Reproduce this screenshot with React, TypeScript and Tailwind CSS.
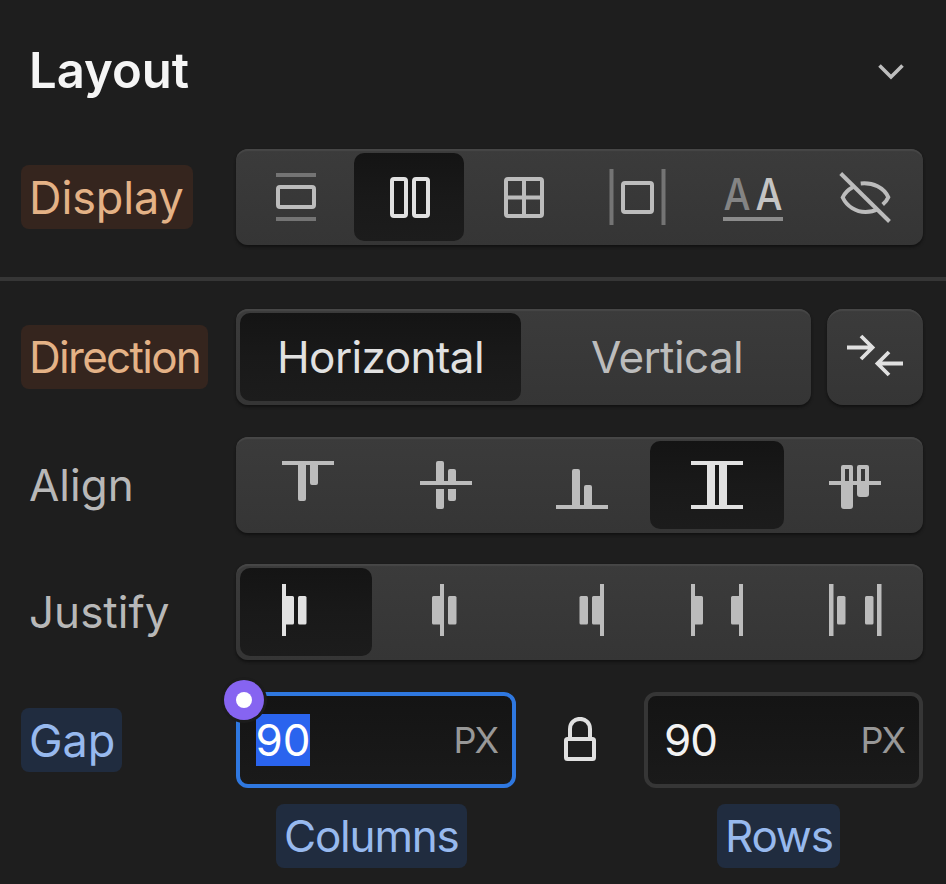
import type { ReactNode } from "react";

type IconProps = { ox?: number; oy?: number; children: ReactNode };

function Icon({ ox = 0, oy = 0, children }: IconProps) {
  return (
    <svg
      width="60"
      height="60"
      viewBox={`${-ox} ${-oy} 60 60`}
      className="block shrink-0 overflow-visible"
      fill="none"
    >
      {children}
    </svg>
  );
}

const raised =
  "bg-linear-to-b from-[#3b3b3b] to-[#353535] shadow-[inset_0_3px_1px_-1px_#474747,0_2px_3px_0_#111111]";
const pressed =
  "rounded-[10px] bg-linear-to-b from-[#141414] via-[#191919] to-[#1c1c1c] text-[#e1e1e1]";

function Segments({ children, className = "w-[687px]" }: { children: ReactNode; className?: string }) {
  return (
    <div className={`flex h-24 shrink-0 gap-1 rounded-xl p-1 ${raised} ${className}`}>{children}</div>
  );
}

function Cell({ width, active = false, children }: { width: string; active?: boolean; children: ReactNode }) {
  return (
    <button
      className={`flex h-[88px] shrink-0 items-center justify-center ${width} ${active ? pressed : "text-[#bcbcbc]"}`}
    >
      {children}
    </button>
  );
}

function Chip({ tone, size, children }: { tone: string; size: string; children: ReactNode }) {
  return (
    <span
      className={`flex h-16 items-center rounded-lg pl-2 leading-none whitespace-nowrap ${tone} ${size}`}
    >
      {children}
    </span>
  );
}

const orange = "bg-[#35251e] text-[#e4b286]";
const blue = "bg-[#202c3f] text-[#97b9ee]";
const plain = "text-[#b8b8b8]";

function Row({ label, className = "", children }: { label: ReactNode; className?: string; children: ReactNode }) {
  return (
    <div className={`flex h-24 items-center ${className}`}>
      <div className="flex w-[236px] shrink-0 pl-[21px]">{label}</div>
      {children}
    </div>
  );
}

export default function App() {
  return (
    <main className="flex h-[884px] w-[946px] flex-col overflow-hidden bg-[#1e1e1e] font-['Inter',sans-serif]">
      <header className="mb-[9px] flex h-[140px] shrink-0 items-center justify-between pr-[40px] pl-[29px]">
        <h2 className="text-[49px] leading-none font-semibold text-[#f5f5f5]">Layout</h2>
        <svg width="30" height="22" viewBox="0 -1 30 22" fill="none" stroke="#bdbdbd" strokeWidth="3.6">
          <path d="M3.5 5.5 15 17 26.5 5.5" />
        </svg>
      </header>

      <Row label={<Chip tone={orange} size="w-[172px] text-[45px] tracking-[-0.1px]">Display</Chip>}>
        <Segments>
          <Cell width="w-[110px]">
            <Icon>
              <path d="M11 8H51M11 52H51" stroke="#747474" strokeWidth="4" />
              <rect x="13" y="20" width="36" height="20" rx="2" stroke="currentColor" strokeWidth="4" />
            </Icon>
          </Cell>
          <Cell width="w-[110px]" active>
            <Icon>
              <g stroke="currentColor" strokeWidth="4">
                <rect x="13" y="12" width="14" height="37" rx="2" />
                <rect x="35" y="12" width="14" height="37" rx="2" />
              </g>
            </Icon>
          </Cell>
          <Cell width="w-[110px]">
            <Icon>
              <g stroke="currentColor" strokeWidth="4">
                <rect x="13" y="12" width="36" height="37" rx="2" />
                <path d="M31 12V49M13 30.5H49" />
              </g>
            </Icon>
          </Cell>
          <Cell width="w-[110px]">
            <Icon>
              <path d="M4.5 2V58M56.5 2V58" stroke="#747474" strokeWidth="4" />
              <rect x="16" y="16" width="29" height="29" rx="2" stroke="currentColor" strokeWidth="4" />
            </Icon>
          </Cell>
          <Cell width="w-[110px]">
            <Icon>
              <g fontFamily="Inter, sans-serif" fontSize="44" fontWeight="500">
                <text x="2.5" y="42.5" textLength="27" lengthAdjust="spacingAndGlyphs" fill="#848484">
                  A
                </text>
                <text x="34.5" y="42.5" textLength="27" lengthAdjust="spacingAndGlyphs" fill="#c4c4c4">
                  A
                </text>
              </g>
              <path d="M2 52H62" stroke="#8c8c8c" strokeWidth="4" />
            </Icon>
          </Cell>
          <Cell width="w-[110px]">
            <Icon>
              <g stroke="currentColor" strokeWidth="4">
                <path d="M5.7 6.5 54.5 54.5" />
                <path d="M18 20C13 22.8 9.5 26.3 7.7 30.5C12 39.5 21 45 30.5 45C35.500 45 39.500 44 42.500 42.300" />
                <path d="M25.700 16.500C38 15.300 49 20.500 53.300 30.300C52.200 33 50.300 35.300 47.700 37.500" />
              </g>
            </Icon>
          </Cell>
        </Segments>
      </Row>

      <div className="mt-8 mb-7 h-1 shrink-0 bg-[#363636]" />

      <Row label={<Chip tone={orange} size="w-[187px] text-[44px] tracking-[-1.7px]">Direction</Chip>}>
        <Segments className="w-[575px] text-[44px] leading-none tracking-[-0.6px]">
          <Cell width="w-[281px]" active>
            Horizontal
          </Cell>
          <Cell width="w-[284px]">Vertical</Cell>
        </Segments>
        <button className={`ml-4 flex size-24 items-center justify-center rounded-2xl text-[#e0e0e0] ${raised}`}>
          <Icon>
            <g stroke="currentColor" strokeWidth="3.8">
              <path d="M2 20.5H28M16 9 27.5 20.5 16 32" />
              <path d="M58 36.5H32M44 25 32.5 36.5 44 48" />
            </g>
          </Icon>
        </button>
      </Row>

      <Row className="mt-8" label={<Chip tone={plain} size="w-[187px] text-[44px]">Align</Chip>}>
        <Segments>
          <Cell width="w-[132px]">
            <Icon ox={6}>
              <path
                fill="currentColor"
                d="M0 6H52V10H36V28a2 2 0 0 1-2 2h-4a2 2 0 0 1-2-2V10H24V44a2 2 0 0 1-2 2h-4a2 2 0 0 1-2-2V10H0Z"
              />
            </Icon>
          </Cell>
          <Cell width="w-[134px]">
            <Icon ox={7}>
              <path
                fill="currentColor"
                d="M0 26H16V8a2 2 0 0 1 2-2h4a2 2 0 0 1 2 2V26H28V16a2 2 0 0 1 2-2h4a2 2 0 0 1 2 2V26H52V30H0ZM16 34H24V52a2 2 0 0 1-2 2h-4a2 2 0 0 1-2-2ZM28 34H36V44a2 2 0 0 1-2 2h-4a2 2 0 0 1-2-2Z"
              />
            </Icon>
          </Cell>
          <Cell width="w-[132px]">
            <Icon ox={6}>
              <path
                fill="currentColor"
                d="M0 50H16V16a2 2 0 0 1 2-2h4a2 2 0 0 1 2 2V50H28V32a2 2 0 0 1 2-2h4a2 2 0 0 1 2 2V50H52V54H0Z"
              />
            </Icon>
          </Cell>
          <Cell width="w-[134px]" active>
            <Icon ox={4}>
              <path fill="currentColor" d="M0 6H52V10H36V50H52V54H0V50H16V10H0ZM24 10V50H28V10Z" fillRule="evenodd" />
            </Icon>
          </Cell>
          <Cell width="w-[132px]">
            <Icon ox={5}>
              <path
                fill="currentColor"
                fillRule="evenodd"
                d="M0 26H12V12a2 2 0 0 1 2-2h8a2 2 0 0 1 2 2V26H28V12a2 2 0 0 1 2-2h8a2 2 0 0 1 2 2V26H52V30H40V39a3 3 0 0 1-3 3h-6a3 3 0 0 1-3-3V30H24V51a3 3 0 0 1-3 3h-6a3 3 0 0 1-3-3V30H0ZM16 14V26H20V14ZM32 14V26H36V14Z"
              />
            </Icon>
          </Cell>
        </Segments>
      </Row>

      <Row className="mt-[31px]" label={<Chip tone={plain} size="w-[187px] text-[44px]">Justify</Chip>}>
        <Segments>
          <Cell width="w-[132px]" active>
            <Icon ox={6}>
              <g fill="currentColor">
                <path d="M0 2H4V14H10.5a1.5 1.5 0 0 1 1.5 1.5V41a1.5 1.5 0 0 1-1.5 1.5H4V54H0Z" />
                <rect x="16" y="14" width="8.5" height="28.5" rx="1.5" />
              </g>
            </Icon>
          </Cell>
          <Cell width="w-[134px]">
            <Icon ox={7}>
              <g fill="currentColor">
                <path d="M20 2H24V54H20V42.5H13.5a1.5 1.5 0 0 1-1.5-1.5V15.5a1.5 1.5 0 0 1 1.5-1.5H20Z" />
                <rect x="28" y="14" width="8.5" height="28.5" rx="1.5" />
              </g>
            </Icon>
          </Cell>
          <Cell width="w-[132px]">
            <Icon ox={6}>
              <g fill="currentColor">
                <rect x="23.5" y="14" width="8.5" height="28.5" rx="1.5" />
                <path d="M44 2H48V54H44V42.5H37.5a1.5 1.5 0 0 1-1.5-1.5V15.5a1.5 1.5 0 0 1 1.5-1.5H44Z" />
              </g>
            </Icon>
          </Cell>
          <Cell width="w-[134px]">
            <Icon ox={4}>
              <g fill="currentColor">
                <path d="M0 2H4V14H10.5a1.5 1.5 0 0 1 1.5 1.5V41a1.5 1.5 0 0 1-1.5 1.5H4V54H0Z" />
                <path d="M48 2H52V54H48V42.5H41.5a1.5 1.5 0 0 1-1.5-1.5V15.5a1.5 1.5 0 0 1 1.5-1.5H48Z" />
              </g>
            </Icon>
          </Cell>
          <Cell width="w-[132px]">
            <Icon ox={5}>
              <g fill="currentColor">
                <rect x="0" y="2" width="4.5" height="52" />
                <rect x="8" y="14" width="8.5" height="28.5" rx="1.5" />
                <rect x="36" y="14" width="8.5" height="28.5" rx="1.5" />
                <rect x="48" y="2" width="4.5" height="52" />
              </g>
            </Icon>
          </Cell>
        </Segments>
      </Row>

      <Row className="mt-8" label={<Chip tone={blue} size="w-[101px] text-[45px]">Gap</Chip>}>
        <div className="relative flex h-24 w-[280px] items-center justify-between rounded-xl border-4 border-[#2f78e0] bg-linear-to-b from-[#141414] to-[#1a1a1a] pr-[15px] pl-4">
          <span className="flex h-[52px] w-[54px] items-center justify-center bg-[#2a64ee] text-[44px] leading-none text-white">
            90
          </span>
          <span className="text-[36px] leading-none tracking-[-2px] text-[#989898]">PX</span>
          <span className="absolute -top-4 -left-4 flex size-10 items-center justify-center rounded-full bg-[#8664f1] ring-3 ring-[#1c1c1c]">
            <span className="size-4 rounded-full bg-white" />
          </span>
        </div>
        <div className="flex w-32 shrink-0 justify-center">
          <svg width="34" height="46" viewBox="0 1 34 46" fill="none" stroke="#e0e0e0" strokeWidth="4">
            <rect x="3" y="23" width="28" height="20" rx="1.5" />
            <path d="M7 23V13C7 -0.5 27 -0.5 27 13V23" />
          </svg>
        </div>
        <div className="flex h-24 w-[279px] items-center justify-between rounded-xl border-4 border-[#363636] bg-linear-to-b from-[#141414] to-[#1a1a1a] pr-[15px] pl-4">
          <span className="text-[44px] leading-none tracking-[-1px] text-[#f2f2f2]">90</span>
          <span className="text-[36px] leading-none tracking-[-2px] text-[#989898]">PX</span>
        </div>
      </Row>

      <div className="mt-4 flex gap-[250px] pl-[276px]">
        <Chip tone={blue} size="w-[191px] text-[44px] tracking-[-1.2px]">Columns</Chip>
        <Chip tone={blue} size="w-[123px] text-[44px] tracking-[-1.2px]">Rows</Chip>
      </div>
    </main>
  );
}
